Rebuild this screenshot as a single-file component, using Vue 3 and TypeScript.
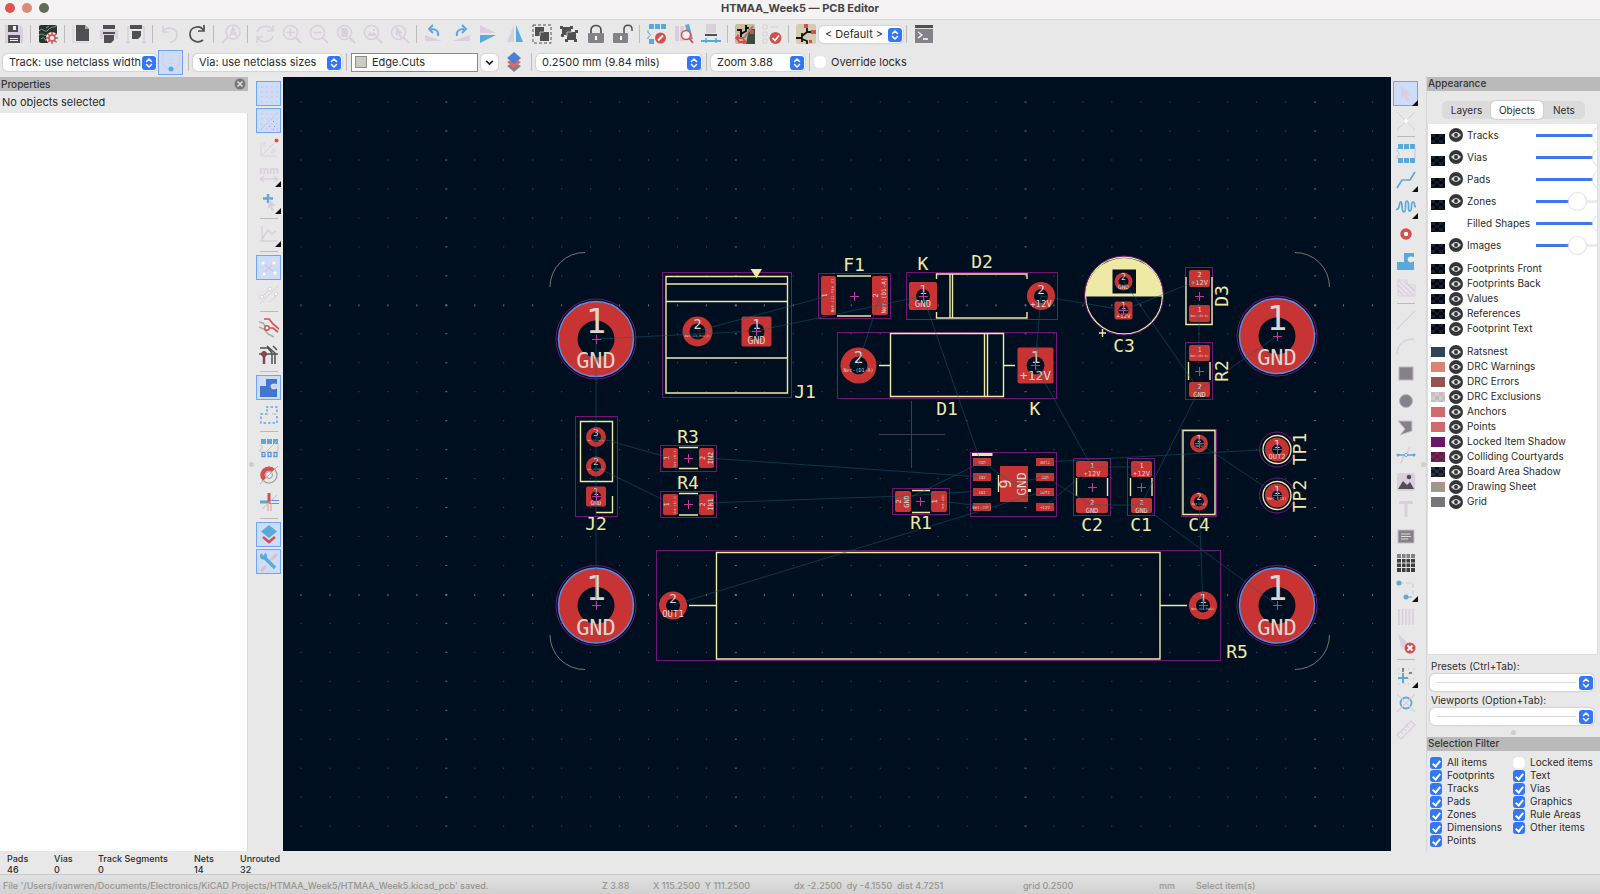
<script setup lang="ts">
import { ref } from 'vue'

type Tool = { icon: string; label: string; on?: boolean; more?: boolean } | null

const M = '#d9cfdd'
const D = '#505052'
const G = '#858188'
const B = '#5aa9db'
const R = '#d4504f'

const stroke = (d: string, c: string, w = 1.5, extra = '') =>
  `<path d="${d}" fill="none" stroke="${c}" stroke-width="${w}" ${extra}/>`
const fill = (d: string, c: string) => `<path d="${d}" fill="${c}"/>`
const lens = (inner: string) =>
  `<circle cx="8.5" cy="8.5" r="7" fill="none" stroke="${M}" stroke-width="1.5"/>` +
  stroke('M13.5 13.5L19 19', M, 2) + inner
const dots = (c: string) => {
  let s = ''
  for (let x = 0; x < 4; x++) for (let y = 0; y < 4; y++) s += `<rect x="${2 + x * 5}" y="${2 + y * 5}" width="1.5" height="1.5" fill="${c}"/>`
  return s
}

const icons: Record<string, string> = {
  save: fill('M1 1h15l3 3v15H1z', M) + fill('M4 1h10v7H4zM4 11h12v8H4z', D) + fill('M9 2h3v4H9zM6 14h8v1H6zM6 16h8v1H6z', '#eee'),
  setup: `<rect x="1" y="1" width="18" height="18" rx="2" fill="#26352d"/>` + stroke('M1 7c4-5 5 3 9-1s5-2 8-4M1 11c5-3 4 2 8 0M3 15c2-2 4-1 5 2M8 4l3-2', '#8fa096', 1) +
    `<circle cx="14" cy="14" r="6" fill="#f3e9e6"/><circle cx="14" cy="14" r="3" fill="none" stroke="${R}" stroke-width="1.5"/>` + stroke('M14 8v3M14 17v3M8 14h3M17 14h3M10 10l2 2M16 16l2 2M18 10l-2 2M12 16l-2 2', R, 1.5),
  page: fill('M4 1h9l4 4v12H4z', D) + fill('M13 1l4 4h-4z', '#aaa') + stroke('M1 1v18M1 18.5h16', M, 1),
  print: fill('M1 6h18v9h-3v-3H4v3H1z', M) + fill('M4 1h12v4H4zM4 8h12v2H4zM5 11h10v5l-3 3H5z', D),
  plot: stroke('M1 3h18M2 3v15M18 3v15M0 18.500h4M16 18.500h4', M, 1.5) + fill('M4 1h12v4H4zM6 7h9v5l-3 3H6z', D),
  undo: stroke('M3 2v6h6M3 8c3-6 14-5 14 3 0 4-3 7-7 7', M, 1.7),
  redo: stroke('M17 1v6h-6M17 7C13 0 3 3 3 10c0 7 8 10 13 6', D, 1.7),
  find: `<circle cx="12" cy="8" r="7" fill="none" stroke="${M}" stroke-width="1.500"/>` + stroke('M7 13L1 19', M, 2) + stroke('M9 12l3-8 3 8M10 9.500h4', M, 1.8),
  refresh: stroke('M2 8C4 2 13 0 17 6M18 1v6h-6M18 12c-2 6-11 8-15 2M2 19v-6h6', M, 1.5),
  zin: lens(stroke('M8.500 4.500v8M4.500 8.500h8', M, 1.7)),
  zout: lens(stroke('M4.500 8.500h8', M, 1.7)),
  zpage: lens(fill('M5 4h5l2 2v7H5z', M)),
  zobj: lens(fill('M4 12l3-4 2 2 2-2 3 4zM10 5h2v2h-2z', M)),
  zsel: lens(fill('M6 3l7 6-3 .5 2 4-2 .5-1.500-4-2.500 2z', M)),
  rotl: fill('M1 11l17 6H1z', M) + stroke('M14 12c1-5-2-7-7-7M9 1L5 5l4 4', B, 2),
  rotr: fill('M19 11L2 17h17z', M) + stroke('M6 12c-1-5 2-7 7-7M11 1l4 4-4 4', B, 2),
  mirv: fill('M2 1l16 8H2z', M) + fill('M2 19l16-8H2z', B),
  mirh: fill('M9 1v17H2z', M) + fill('M11 1v17h7z', B),
  group: fill('M3 3h9v9H3z', D) + fill('M8 8h9v9H8z', D) + stroke('M8 12V8h4', '#bbb', 1) + stroke('M1 1h18v18H1z', D, 1, 'stroke-dasharray="3 2"'),
  ungroup: fill('M3 3h9v8H3z', D) + fill('M8 8h9v8H8z', D) + stroke('M8 12V8h5', '#bbb', 1) + fill('M1 2h3v3H1zM15 15h3v3h-3zM11 2h3v3h-3zM2 10h3v3H2zM16 6h3v3h-3zM6 15h3v3H6z', D),
  lock: `<rect x="2" y="9" width="16" height="10" rx="1" fill="${G}"/>` + stroke('M5 9V6c0-6 10-6 10 0v3', D, 1.7) + fill('M9 12h2v4H9z', '#fff'),
  unlock: `<rect x="0" y="9" width="15" height="10" rx="1" fill="${G}"/>` + stroke('M11 9V5c0-5 8-5 8 0v2', D, 1.500) + fill('M7 12h2v4H7z', '#fff'),
  fped: fill('M2 0h5v5H2zM8 0h5v5H8zM14 0h5v5h-5zM2 15h5v5H2z', B) + stroke('M1 6v3c3 0 3 4 0 4v2', B, 1) + `<circle cx="13.500" cy="14" r="5.500" fill="${R}"/>` + stroke('M11 16.500l5-5', '#fff', 2),
  fpbr: fill('M1 2h4v15H1zM6 2h4v15H6z', M) + fill('M11 1l4-1 4 15-4 1z', B) + `<circle cx="12" cy="11" r="4.500" fill="#f5eef0" stroke="${R}" stroke-width="1.500"/>` + stroke('M15 14l4 5', R, 2),
  update: fill('M5 0h10v9H5z', M) + fill('M4 10h12v2H4z', D) + stroke('M0 17h20', B, 2) + stroke('M5 14v5M15 14v5', B, 1.5),
  netl: `<rect x="0" y="0" width="20" height="20" rx="2" fill="#c8bd9f"/>` + fill('M14 5h6v15h-9z', '#3c4c3e') + stroke('M2 6h4v4M6 10l5-3V1M6 10v4M11 4h3', '#111', 2) + stroke('M18 2L9 14', '#8d867c', 2) + fill('M15 6h4v4h-4z', R) + stroke('M1 14h8M4 11l-3 3 3 3M3 18h7M8 15l3 3-3 2', R, 1.8),
  drc: stroke('M1 1h4v4H1zM1 8h4v4H1zM1 15h4v4H1zM8 3h8', M, 1) + `<circle cx="13.500" cy="14" r="6" fill="${R}"/>` + stroke('M10.500 14l2.500 2.500 4-5', '#fff', 1.700),
  schem: `<rect x="0" y="0" width="20" height="20" rx="2" fill="#d3ccae"/>` + stroke('M0 14h6M6 9v9M6 12l5-4V4M6 15l5 2v3M11 8h6', '#151515', 1.8) + fill('M8 0h4v4H8zM15 6h5v4h-5zM13 16h3v3h-3z', R),
  console: fill('M1 1h18v18H1z', G) + fill('M1 1h18v3H1z', D) + stroke('M1 4.500h18', '#ddd', 1) + stroke('M4 8l4 3-4 3M9 15h5', '#fff', 1.3),
  autow: stroke('M2 1v11l4 5h8l4-5V1', M, 1.5) + stroke('M6 8h8M6 11h8', M, 1) + `<circle cx="10" cy="17" r="2.500" fill="${B}"/>`,
  layers: fill('M10 10l7 4-7 6-7-6z', G) + fill('M10 6l7 4-7 6-7-6z', '#e06a60') + fill('M10 0l7 6-7 6-7-6z', '#4b7fd6'),
  grid: dots('#d9c3d6'),
  gridov: dots('#d9c3d6') + stroke('M1 19L19 1', '#d9c3d6', 1) + fill('M10 15h1v1h-1zM14 10h1v1h-1zM15 15h1v1h-1zM14 18h1v1h-1z', '#b08fae'),
  polar: stroke('M2 5v13h16M2 18L17 3', M, 1) + `<text x="4" y="9" font-family="Liberation Sans" font-size="9" fill="${M}">r</text><text x="12" y="16" font-family="Liberation Serif" font-style="italic" font-size="9" fill="${M}">θ</text><circle cx="17.500" cy="2.500" r="2" fill="${R}"/>`,
  mm: `<text x="10" y="9" text-anchor="middle" font-family="Liberation Sans" font-weight="700" font-size="11" fill="${M}">mm</text>` + stroke('M2 14h16M5 11l-4 3 4 3M15 11l4 3-4 3', M, 1.300),
  cursor: stroke('M9 2v9M4 6.500h10', B, 2.500) + fill('M10 7l7 7-4 0 2 4-2 1-2-4-2 2z', M),
  axes: stroke('M3 1v15h16M3 14l6-9 4 4 4-3', M, 1.500) + stroke('M0 16h5', M, 1),
  rats: stroke('M4 5l12 10M5 15L15 5', '#c8bfd0', 1) + '<g fill="#fff" stroke="#ddd"><circle cx="4" cy="5" r="2"/><circle cx="15" cy="5" r="2"/><circle cx="5" cy="16" r="2"/><circle cx="16" cy="15" r="2"/></g>',
  curve: stroke('M3 12l8-8M1 19L19 1M9 17c5-1 8-5 8-9', M, 1) + '<g fill="#fff" stroke="#d5cad8"><circle cx="3" cy="12" r="2"/><circle cx="11" cy="4" r="2"/><circle cx="17" cy="9" r="2"/></g>',
  high: stroke('M0 4l4 1 4 5M0 9l5 2 4 5 6 3', '#aaa', 1.500) + stroke('M5 1h5l4 5 6 5M10 10h4l5 4', R, 1.700) + `<circle cx="8" cy="10" r="2.200" fill="#fff" stroke="${R}" stroke-width="1.500"/>`,
  tracks: stroke('M1 3h8l4 5v11M8 1l8 7v11M14 1l4 4M0 9h19', D, 1.500) + stroke('M5 11v8', '#8a4060', 2.500) + `<circle cx="5" cy="9" r="2.500" fill="#a83c3c" stroke="${D}"/>`,
  zone: fill('M7 1h11v5c-6-2-8 2-5 5 2 1 4 0 5-1v9H1V8h6z', '#4376cf') + stroke('M13 8h6', M, 2),
  zoneo: stroke('M7 2h11v5M18 11v7H2V9h6V2', '#6aa2ea', 1.500, 'stroke-dasharray="2.500 2"') + stroke('M13 9h5', M, 2),
  pads: fill('M2 1h5v5H2zM8 1h5v5H8zM14 1h5v5h-5z', B) + stroke('M3 14.500h3v4H3zM9 14.500h3v4H9zM15 14.500h3v4h-3z', '#5a95e2', 1.300) + stroke('M1 7c3 1 3 4 0 5v2M19 6v8M4 17L18 3', '#cbb', 1),
  viao: `<circle cx="10" cy="10" r="8" fill="none" stroke="#999" stroke-width="1.200"/><circle cx="10" cy="10" r="3.500" fill="none" stroke="#999"/>` + stroke('M14.500 5.500A6 6 0 0 0 5.500 14.500', R, 4.500) + stroke('M1 19L19 1', '#bbb', 1),
  trko: stroke('M1 10h9', B, 3) + stroke('M10 8.500h10M10 11.500h10', '#5a95e2', 1) + stroke('M10 1v10', R, 3) + stroke('M9 11v8M12 11v8', '#d99', 1) + stroke('M3 17L18 3', '#cbb', 1),
  lay2: fill('M10 0l8 6.500-8 6.500-8-6.500z', B) + stroke('M4 12l6 5 6-5', R, 2.500),
  tools: stroke('M18 2l-6 6M2 19l5-5', '#e0bfc4', 2.500) + stroke('M5 5l11 11', B, 3.500) + `<circle cx="4.500" cy="4" r="3.500" fill="${B}"/>` + fill('M1 0l4 4 1-4zM0 0h3l-3 4z', '#cfdffb'),
  arrow: fill('M5 1l10 10h-4l3 6-3 1-3-6-3 3z', M),
  ratl: stroke('M1 1l18 18M19 1L1 19', M, 1) + '<circle cx="10" cy="10" r="2" fill="#fff"/>',
  fp: fill('M2 1h5v5H2zM8 1h5v5H8zM14 1h5v5h-5zM2 15h5v5H2zM8 15h5v5H8zM14 15h5v5h-5z', B) + stroke('M1 5v3c3 1 3 4 0 5v3M19 5v10', '#ccc2cc', 1),
  route: stroke('M1 18l5-8h8l5-8', B, 1.700),
  tune: stroke('M0 12c4 2 3-8 5-7s0 10 3 10 0-11 3-11 0 11 3 10 0-9 3-9 0 4 3 5', B, 1.700),
  via: `<circle cx="10" cy="10" r="4" fill="#fff" stroke="${R}" stroke-width="3.500"/>`,
  zadd: fill('M8 2h10v4c-6-2-8 2-5 5 2 1 4 0 5-1v9H1v-8h7z', B) + stroke('M13 8.500h6', '#eee', 2),
  rule: stroke('M2 2h9v5h8v11H2z', M, 1) + stroke('M2 7l11 11M2 12l6 6M3 3l15 15M8 3l10 10M13 7l6 6', M, 1.500),
  line: stroke('M1 19L19 1', M, 1.500),
  arc: stroke('M1 18C1 8 7 2 18 2', M, 1.500),
  rect: `<rect x="3" y="3" width="14" height="13" fill="${G}" stroke="#bcb4bf"/>`,
  circ: `<circle cx="10" cy="10" r="6.500" fill="${G}" stroke="#bcb4bf"/>`,
  poly: `<path d="M2 3h14v10l-12 4 5-6z" fill="${G}" stroke="#ccc3cf"/>`,
  bez: stroke('M14 2c-4 4 0 6-5 8s0 5-5 8', M, 1.500) + stroke('M1 10h18', B, 1.500) + `<circle cx="2" cy="10" r="1.500" fill="${B}"/><circle cx="18" cy="10" r="1.500" fill="${B}"/><circle cx="10" cy="10" r="1.500" fill="#fff" stroke="${B}"/>`,
  img: `<rect x="1" y="1" width="18" height="18" rx="2" fill="${M}"/>` + fill('M2 17l5-8 4 4 3-3 4 7z', D) + `<circle cx="13" cy="5" r="2.300" fill="${D}"/>`,
  text: fill('M3 2h14v3h-5.500v13h-3V5H3z', M),
  tbox: `<rect x="2" y="4" width="16" height="13" fill="${G}" stroke="#c6bdc9"/>` + stroke('M5 8h9M5 10.500h10M5 13h7', '#ddd', 1),
  table: fill('M1 1h18v18H1z', '#3e3e40') + fill('M1 1h18v4H1z', G) + stroke('M1 5.500h18M1 10h18M1 14.500h18M5.500 1v18M10 1v18M14.500 1v18', '#e2e2e2', 1),
  dim: stroke('M3 3h13M17 3v12', '#ccc', 1, 'stroke-dasharray="5 2"') + `<circle cx="3" cy="3" r="2.500" fill="${B}"/><circle cx="10" cy="17" r="2.500" fill="${B}"/>` + stroke('M10 17h6', B, 1),
  bar: stroke('M3 2v16M6.500 2v16M10 2v16M13.500 2v16M17 2v16', M, 1.700),
  del: fill('M2 0l12 11H9l-3 5z', M) + `<circle cx="14" cy="14" r="5.500" fill="${R}"/>` + stroke('M11.500 11.500l5 5M16.500 11.500l-5 5', '#fff', 1.800),
  origin: dots(M) + stroke('M7 7v10M2 12h10', B, 2) + stroke('M7 2v4M13 7h3', '#665', 1.500),
  gorig: `<circle cx="10" cy="10" r="5.500" fill="none" stroke="${B}" stroke-width="1.800"/>` + stroke('M1 1l18 18M19 1L1 19', M, 1.200),
  ruler: stroke('M1 15L15 1l4 4L5 19zM5 12l2 2M8 9l2 2M11 6l2 2', M, 1.300),
}

const topTools: Tool[] = [
  { icon: 'save', label: 'Save' }, null, { icon: 'setup', label: 'Board setup' }, null,
  { icon: 'page', label: 'Page settings' }, { icon: 'print', label: 'Print' }, { icon: 'plot', label: 'Plot' }, null,
  { icon: 'undo', label: 'Undo' }, { icon: 'redo', label: 'Redo' }, null, { icon: 'find', label: 'Find' }, null,
  { icon: 'refresh', label: 'Refresh' }, { icon: 'zin', label: 'Zoom in' }, { icon: 'zout', label: 'Zoom out' },
  { icon: 'zpage', label: 'Zoom to fit' }, { icon: 'zobj', label: 'Zoom to objects' }, { icon: 'zsel', label: 'Zoom to selection' }, null,
  { icon: 'rotl', label: 'Rotate left' }, { icon: 'rotr', label: 'Rotate right' }, { icon: 'mirv', label: 'Mirror vertically' },
  { icon: 'mirh', label: 'Mirror horizontally' }, { icon: 'group', label: 'Group' }, { icon: 'ungroup', label: 'Ungroup' },
  { icon: 'lock', label: 'Lock' }, { icon: 'unlock', label: 'Unlock' }, null,
  { icon: 'fped', label: 'Footprint editor' }, { icon: 'fpbr', label: 'Footprint browser' }, { icon: 'update', label: 'Check footprints' }, null,
  { icon: 'netl', label: 'Update from schematic' }, { icon: 'drc', label: 'Design rules checker' }, null,
  { icon: 'schem', label: 'Schematic editor' },
]
const leftTools: Tool[] = [
  { icon: 'grid', label: 'Show grid', on: true }, { icon: 'gridov', label: 'Grid overrides', on: true },
  { icon: 'polar', label: 'Polar coordinates' }, { icon: 'mm', label: 'Units', more: true }, { icon: 'cursor', label: 'Cursor shape', more: true }, null,
  { icon: 'axes', label: 'Line modes', more: true }, null,
  { icon: 'rats', label: 'Show ratsnest', on: true }, { icon: 'curve', label: 'Curved ratsnest' }, null,
  { icon: 'high', label: 'Layer contrast' }, { icon: 'tracks', label: 'Net highlight' }, null,
  { icon: 'zone', label: 'Zone fills', on: true }, { icon: 'zoneo', label: 'Zone outlines' }, null,
  { icon: 'pads', label: 'Sketch pads' }, { icon: 'viao', label: 'Sketch vias' }, { icon: 'trko', label: 'Sketch tracks' }, null,
  { icon: 'lay2', label: 'Appearance manager', on: true }, { icon: 'tools', label: 'Properties manager', on: true },
]
const rightTools: Tool[] = [
  { icon: 'arrow', label: 'Select', on: true, more: true }, { icon: 'ratl', label: 'Local ratsnest' }, null,
  { icon: 'fp', label: 'Place footprint' }, { icon: 'route', label: 'Route tracks', more: true }, { icon: 'tune', label: 'Tune length', more: true },
  { icon: 'via', label: 'Place via' }, { icon: 'zadd', label: 'Draw zone' }, { icon: 'rule', label: 'Draw rule area' }, null,
  { icon: 'line', label: 'Line' }, { icon: 'arc', label: 'Arc' }, { icon: 'rect', label: 'Rectangle' }, { icon: 'circ', label: 'Circle' },
  { icon: 'poly', label: 'Polygon' }, { icon: 'bez', label: 'Bezier' }, { icon: 'img', label: 'Image' }, { icon: 'text', label: 'Text' },
  { icon: 'tbox', label: 'Text box' }, { icon: 'table', label: 'Table' }, { icon: 'dim', label: 'Dimension', more: true },
  { icon: 'bar', label: 'Barcode' }, { icon: 'del', label: 'Delete' }, null,
  { icon: 'origin', label: 'Drill origin', more: true }, { icon: 'gorig', label: 'Grid origin' }, { icon: 'ruler', label: 'Measure' },
]

const sliders = ref([
  { name: 'Tracks', v: 100, eye: true }, { name: 'Vias', v: 100, eye: true }, { name: 'Pads', v: 100, eye: true },
  { name: 'Zones', v: 58, eye: true }, { name: 'Filled Shapes', v: 100, eye: false }, { name: 'Images', v: 58, eye: true },
])
const plain = ['Footprints Front', 'Footprints Back', 'Values', 'References', 'Footprint Text']
const coloured = [
  ['Ratsnest', 'c-rats'], ['DRC Warnings', 'c-warn'], ['DRC Errors', 'c-err'], ['DRC Exclusions', 'c-excl'], ['Anchors', 'c-anchor'],
  ['Points', 'c-anchor'], ['Locked Item Shadow', 'c-lock'], ['Colliding Courtyards', 'c-coll'], ['Board Area Shadow', 'c-board'],
  ['Drawing Sheet', 'c-sheet'], ['Grid', 'c-grid'],
]
const filters = ref([
  { n: 'All items', on: true }, { n: 'Locked items', on: false }, { n: 'Footprints', on: true }, { n: 'Text', on: true },
  { n: 'Tracks', on: true }, { n: 'Vias', on: true }, { n: 'Pads', on: true }, { n: 'Graphics', on: true },
  { n: 'Zones', on: true }, { n: 'Rule Areas', on: true }, { n: 'Dimensions', on: true }, { n: 'Other items', on: true }, { n: 'Points', on: true },
])
const override = ref(false)
const stats = [['Pads', '46'], ['Vias', '0'], ['Track Segments', '0'], ['Nets', '14'], ['Unrouted', '32']]

// Board geometry
const gridX = Array.from({ length: 39 }, (_, i) => ({ p: 301 + i * 28.96, major: i % 10 === 5 }))
const gridY = Array.from({ length: 27 }, (_, i) => ({ p: 101.6 + i * 28.96, major: i % 10 === 7 }))
const courts = [
  [662, 272, 129, 125], [818, 273, 72, 45], [906, 272, 151, 47], [837, 332, 219, 66], [1185, 267, 27, 57], [1185, 342, 27, 57],
  [1181, 429, 35, 87], [1127, 458, 27, 57], [1073, 458, 37, 57], [970, 452, 86, 64], [892, 488, 57, 26],
  [660, 445, 56, 26], [660, 491, 56, 26], [575, 416, 42, 100], [656, 550, 564, 110],
]
const silk = [
  'M666 276.500H787.500V393H666zM666 284H787.500M666 301.500H787.500M666 358H787.500',
  'M837 276H871M837 316H871',
  'M936.500 279V274H1027V279M936.500 312V318H1027V312M950 274V318M952.500 274V318',
  'M890.500 333.500H1003.500V396.500H890.500zM984.500 334V396M987.500 334V396M879 365.500H890M1004 365.500H1015',
  'M1186 277V324.500H1212V277M1188.500 362V380M1210 362V380',
  'M1183 430.500H1215V514.500H1183zM1130.500 478V496M1152 478V496M1076.500 478V496M1107.500 478V496',
  'M912 490.500H930M912 512.500H930M679 447.500H698M679 468.500H698M679 493.500H698M679 515H698',
  'M580.500 421.500H612.500V481.500H580.500zM596 512.500H612.500V496M998.500 475V492M1099 333H1106M1102.500 329V337',
  'M716.500 552.500H1160V659H716.500zM689 605.500H716M1160 605.500H1187',
]
const bigPads = [[596, 339], [1277, 336], [596, 605.5], [1277, 605.5]]
const rounds = [
  [697.5, 331.5, 15, 8, '2', 'Net-(J1-Pin_2)', 3], [1041, 296, 14, 7, '2', '+12V', 9], [858.5, 365.5, 18, 9, '2', 'Net-(D1-A)', 5],
  [1123.5, 281.5, 9, 5, '2', 'GND', 6], [1199, 443.5, 9, 5, '1', 'OUT2', 3], [1199, 501.5, 9, 5, '2', 'Net-(C4)', 3],
  [596, 437, 10, 5, '3', 'Net-(J2-Pin_3)', 2], [596, 466.5, 10, 5, '2', 'Net-(J2-Pin_2)', 2],
  [673, 605.5, 14, 7, '2', 'OUT1', 9], [1203, 605.5, 14, 7, '1', 'Net-(C4-Pad2)', 3],
  [1277, 449.5, 12, 5, '1', 'OUT2', 7], [1277, 495.5, 12, 5, '1', 'Net-(C4)', 4],
] as [number, number, number, number, string, string, number][]
const squares = [
  [756.5, 331.5, 15, 8, '1', 'GND', 10], [923, 296, 14, 7, '1', 'GND', 9], [1035.500, 365.5, 18, 9, '1', '+12V', 13],
  [1123.5, 310.5, 9, 5, '1', '+12V', 6], [596, 496.5, 10, 5, '1', 'GND', 6],
] as [number, number, number, number, string, string, number][]
const smd = [
  [1189, 270, 21, 17, '2', '+12V', 7], [1189, 305, 21, 17, '1', 'Net-(D3-K)', 3], [1189, 345, 21, 16, '1', 'Net-(D3-K)', 3], [1189, 382, 21, 15, '2', 'GND', 7],
  [1131, 461, 21, 16, '1', '+12V', 7], [1131, 498, 21, 15, '2', 'GND', 7], [1076, 461, 32, 16, '1', '+12V', 7], [1076, 498, 32, 15, '2', 'GND', 7],
] as [number, number, number, number, string, string, number][]
const vert = [
  [821, 276, 15, 39, '1', 'Net-(J1-Pin_2)', 4], [872, 276, 16, 39, '2', 'Net-(D1-A)', 6], [663, 448, 15, 20, '1', 'Net-(J2-3)', 3], [699, 448, 15, 20, '2', 'IN2', 7],
  [663, 494, 15, 21, '1', 'Net-(J2-2)', 3], [699, 494, 15, 21, '2', 'IN1', 7], [895, 491, 16, 21, '2', 'GND', 7], [931, 491, 16, 21, '1', 'Net-(U1)', 3],
] as [number, number, number, number, string, string, number][]
const icPads = [0, 1, 2, 3].flatMap((i) => [
  { x: 973, y: 458 + i * 15, t: ['GND', 'IN2', 'IN1', 'Net-(U1)'][i] }, { x: 1036, y: 458 + i * 15, t: ['OUT2', 'GND', 'OUT1', '+12V'][i] },
])
const crosses = [[854, 296], [1199, 296], [1199, 371], [1141, 487], [1092, 487], [920, 501], [688, 458], [688, 504], [596, 339], [1277, 336], [596, 605], [1277, 605], [756, 331], [923, 296], [1035, 365], [1123, 310], [596, 496], [1203, 605], [1199, 443], [1277, 449], [1277, 495]]
const labels = [
  ['F1', 854, 271], ['K', 923, 270], ['D2', 982, 268], ['D1', 947, 415], ['K', 1035, 415], ['C3', 1124, 352], ['J1', 805, 398], ['R3', 688, 443],
  ['R4', 688, 489], ['J2', 596, 530], ['R1', 921, 529], ['C2', 1092, 531], ['C1', 1141, 531], ['C4', 1199, 531], ['R5', 1237, 658],
] as [string, number, number][]
const sideLabels = [['D3', 1222, 296], ['R2', 1222, 371], ['TP1', 1300, 449], ['TP2', 1300, 496]] as [string, number, number][]
const rats = 'M596 339L756 331M596 339V605M697 331L828 296M756 331L923 296L980 460M880 296L858 365M1041 296L1124 310L1199 280M1041 296L1035 365L1092 467H1141M1124 282L1199 390L1277 336M1199 313V352M1199 390L1141 505L1277 605M596 437L670 458M596 467L670 503M707 458L982 477M707 503L903 496L982 491M1045 462L1277 449M1199 443L1277 495M1199 501L1203 605M673 605L1045 491M903 501L982 462L1013 483L1045 477L1092 505H1141M939 501L982 506M1092 467L1045 506'
</script>

<template>
  <div class="app">
    <header class="title">
      <div class="lights"><i class="red"></i><i class="amber"></i><i class="green"></i></div>
      <h1>HTMAA_Week5 — PCB Editor</h1>
    </header>

    <div class="bar top">
      <template v-for="(t, i) in topTools" :key="i">
        <button v-if="t" class="tool" type="button" :aria-label="t.label"><svg viewBox="0 0 20 20" v-html="icons[t.icon]"></svg></button>
        <span v-else class="sep"></span>
      </template>
      <span class="drop w-def">
        <select aria-label="Default"><option>&lt; Default &gt;</option></select>
        <svg viewBox="0 0 14 14"><rect width="14" height="14" rx="3" /><path d="M4.500 5.500L7 3l2.500 2.500M4.500 8.500L7 11l2.500-2.500" /></svg>
      </span>
      <span class="sep"></span>
      <button class="tool" type="button" aria-label="Scripting console"><svg viewBox="0 0 20 20" v-html="icons.console"></svg></button>
    </div>

    <div class="bar second">
      <span class="drop w-track">
        <select aria-label="Track width"><option>Track: use netclass width</option></select>
        <svg viewBox="0 0 14 14"><rect width="14" height="14" rx="3" /><path d="M4.500 5.500L7 3l2.500 2.500M4.500 8.500L7 11l2.500-2.500" /></svg>
      </span>
      <button class="tool on" type="button" aria-label="Auto track width"><svg viewBox="0 0 20 20" v-html="icons.autow"></svg></button>
      <span class="sep wide"></span>
      <span class="drop w-via">
        <select aria-label="Via size"><option>Via: use netclass sizes</option></select>
        <svg viewBox="0 0 14 14"><rect width="14" height="14" rx="3" /><path d="M4.500 5.500L7 3l2.500 2.500M4.500 8.500L7 11l2.500-2.500" /></svg>
      </span>
      <span class="sep wide"></span>
      <span class="layer"><i></i><input type="text" value="Edge.Cuts" aria-label="Layer" /></span>
      <button class="chev" type="button" aria-label="Choose layer"><svg viewBox="0 0 10 10"><path d="M2 3.500l3 3 3-3" /></svg></button>
      <button class="tool" type="button" aria-label="Layer pair"><svg viewBox="0 0 20 20" v-html="icons.layers"></svg></button>
      <span class="sep wide"></span>
      <span class="drop w-grid">
        <select aria-label="Grid"><option>0.2500 mm (9.84 mils)</option></select>
        <svg viewBox="0 0 14 14"><rect width="14" height="14" rx="3" /><path d="M4.500 5.500L7 3l2.500 2.500M4.500 8.500L7 11l2.500-2.500" /></svg>
      </span>
      <span class="sep wide"></span>
      <span class="drop w-zoom">
        <select aria-label="Zoom"><option>Zoom 3.88</option></select>
        <svg viewBox="0 0 14 14"><rect width="14" height="14" rx="3" /><path d="M4.500 5.500L7 3l2.500 2.500M4.500 8.500L7 11l2.500-2.500" /></svg>
      </span>
      <span class="sep wide"></span>
      <label class="check override"><input v-model="override" type="checkbox" />Override locks</label>
    </div>

    <main class="main">
      <section class="props">
        <h2>Properties<button type="button" aria-label="Close"><svg viewBox="0 0 12 12"><circle cx="6" cy="6" r="5.500" /><path d="M3.500 3.500l5 5M8.500 3.500l-5 5" /></svg></button></h2>
        <p>No objects selected</p>
        <div class="blank"></div>
      </section>
      <div class="grip"><i></i></div>
      <nav class="side left">
        <template v-for="(t, i) in leftTools" :key="i">
          <button v-if="t" class="tool" :class="{ on: t.on, more: t.more }" type="button" :aria-label="t.label"><svg viewBox="0 0 20 20" v-html="icons[t.icon]"></svg></button>
          <span v-else class="hsep"></span>
        </template>
      </nav>

      <div class="canvas">
        <svg class="board" viewBox="283 77 1108 774" preserveAspectRatio="xMidYMid slice">
          <template v-for="gy in gridY" :key="gy.p">
            <rect v-for="gx in gridX" :key="gx.p" :x="gx.p - 0.5" :y="gy.p" :width="gx.major ? 2 : 1" :height="gy.major ? 2 : 1" class="dot" :class="{ major: gx.major || gy.major }" />
          </template>
          <path class="edge" d="M550 287A34.500 34.500 0 0 1 585 252.500M1295 252.500A34.500 34.500 0 0 1 1329.500 287M550 635A34.500 34.500 0 0 0 585 669.500M1295 669.500A34.500 34.500 0 0 0 1329.500 635" />
          <path class="aim" d="M879 434.500H945M911.500 401V468" />
          <circle cx="1124" cy="295.500" r="38.500" class="silk" />
          <path class="silk-fill" d="M1085.500 296.500A38.500 38.500 0 0 1 1162.500 296.500z" />
          <circle cx="1124" cy="295.500" r="39.500" class="court" />
          <rect x="1112.500" y="269.500" width="23.500" height="24" class="hole" />

          <g v-for="(p, i) in bigPads" :key="'b' + i">
            <circle :cx="p[0]" :cy="p[1]" r="40" class="court" />
            <circle :cx="p[0]" :cy="p[1]" r="37.500" class="pad ring" />
            <circle :cx="p[0]" :cy="p[1]" r="18.500" class="hole" />
            <text :x="p[0]" :y="p[1] - 6" class="t" font-size="34">1</text>
            <text :x="p[0]" :y="p[1] + 29" class="t" font-size="22">GND</text>
          </g>
          <g v-for="(p, i) in squares" :key="'s' + i">
            <rect :x="p[0] - p[2]" :y="p[1] - p[2]" :width="p[2] * 2" :height="p[2] * 2" rx="2" class="pad" />
            <circle :cx="p[0]" :cy="p[1]" :r="p[3]" class="hole" />
            <text :x="p[0]" :y="p[1] - p[2] * 0.15" class="t" :font-size="p[2] * 0.9">{{ p[4] }}</text>
            <text :x="p[0]" :y="p[1] + p[2] * 0.8" class="t" :font-size="p[6]">{{ p[5] }}</text>
          </g>
          <g v-for="(p, i) in rounds" :key="'r' + i">
            <circle :cx="p[0]" :cy="p[1]" :r="p[2]" class="pad" />
            <circle :cx="p[0]" :cy="p[1]" :r="p[3]" class="hole" />
            <text :x="p[0]" :y="p[1] - p[2] * 0.15" class="t" :font-size="p[2] * 0.9">{{ p[4] }}</text>
            <text :x="p[0]" :y="p[6] < 6 ? p[1] + p[2] * 0.35 : p[1] + p[2] * 0.8" class="t" :font-size="p[6]">{{ p[5] }}</text>
          </g>
          <g v-for="(p, i) in smd" :key="'m' + i">
            <rect :x="p[0]" :y="p[1]" :width="p[2]" :height="p[3]" rx="2" class="pad" />
            <text :x="p[0] + p[2] / 2" :y="p[1] + 7" class="t" font-size="7">{{ p[4] }}</text>
            <text :x="p[0] + p[2] / 2" :y="p[1] + (p[6] < 5 ? 12 : 15)" class="t" :font-size="p[6]">{{ p[5] }}</text>
          </g>
          <g v-for="(p, i) in vert" :key="'v' + i">
            <rect :x="p[0]" :y="p[1]" :width="p[2]" :height="p[3]" rx="2" class="pad" />
            <text class="t" font-size="7" :transform="`translate(${p[0] + 6} ${p[1] + p[3] / 2}) rotate(-90)`">{{ p[4] }}</text>
            <text class="t" :font-size="p[6]" :transform="`translate(${p[0] + (p[6] < 5 ? 13 : 14)} ${p[1] + p[3] / 2}) rotate(-90)`">{{ p[5] }}</text>
          </g>
          <g v-for="(p, i) in icPads" :key="'i' + i">
            <rect :x="p.x" :y="p.y" width="18" height="8" class="pad" />
            <text :x="p.x + 9" :y="p.y + 6" class="t" font-size="4">{{ p.t }}</text>
          </g>
          <rect x="1000" y="466" width="28" height="36" class="pad" />
          <text class="t" font-size="15" transform="translate(1011 484) rotate(-90)">9</text>
          <text class="t" font-size="13" transform="translate(1026 484) rotate(-90)">GND</text>

          <rect v-for="(c, i) in courts" :key="'c' + i" :x="c[0] + 0.500" :y="c[1] + 0.500" :width="c[2]" :height="c[3]" class="court" />
          <path v-for="(s, i) in silk" :key="'k' + i" :d="s" class="silk" />
          <path class="silk-fill" d="M750.500 269H762L756.500 278zM972 453H992.500V456H972zM1028 489h3v3h-3z" />
          <g v-for="y in [449.500, 495.500]" :key="y">
            <circle cx="1277" :cy="y" r="17.500" class="court" />
            <circle cx="1277" :cy="y" r="14" class="silk" />
          </g>
          <path class="rats" :d="rats" />
          <path v-for="(c, i) in crosses" :key="'x' + i" class="cross" :d="`M${c[0] - 4} ${c[1] + 0.5}h9M${c[0] + 0.5} ${c[1] - 4}v9`" />
          <text v-for="(l, i) in labels" :key="'l' + i" :x="l[1]" :y="l[2]" class="ref">{{ l[0] }}</text>
          <text v-for="(l, i) in sideLabels" :key="'q' + i" class="ref" :transform="`translate(${l[1] + 6} ${l[2]}) rotate(-90)`">{{ l[0] }}</text>
        </svg>
      </div>

      <nav class="side right">
        <template v-for="(t, i) in rightTools" :key="i">
          <button v-if="t" class="tool" :class="{ on: t.on, more: t.more }" type="button" :aria-label="t.label"><svg viewBox="0 0 20 20" v-html="icons[t.icon]"></svg></button>
          <span v-else class="hsep"></span>
        </template>
      </nav>
      <div class="grip thin"><i></i></div>

      <aside class="panel">
        <h2>Appearance</h2>
        <div class="tabs"><button type="button">Layers</button><button type="button" class="active">Objects</button><button type="button">Nets</button></div>
        <div class="objects">
          <div class="sliders">
            <div v-for="s in sliders" :key="s.name" class="obj tall">
              <i class="swatch dark"></i>
              <span class="eye"><svg v-if="s.eye" viewBox="0 0 14 14"><circle cx="7" cy="7" r="7" /><path d="M2 7q5-6 10 0q-5 6-10 0z" /><circle cx="7" cy="7" r="2" /></svg></span>
              <label :for="'s-' + s.name">{{ s.name }}</label>
              <input :id="'s-' + s.name" v-model="s.v" type="range" min="0" max="100" :style="{ '--v': s.v + '%' }" />
            </div>
          </div>
          <div class="set">
            <div v-for="n in plain" :key="n" class="obj">
              <i class="swatch dark"></i>
              <span class="eye"><svg viewBox="0 0 14 14"><circle cx="7" cy="7" r="7" /><path d="M2 7q5-6 10 0q-5 6-10 0z" /><circle cx="7" cy="7" r="2" /></svg></span>
              <span>{{ n }}</span>
            </div>
          </div>
          <div class="set">
            <div v-for="c in coloured" :key="c[0]" class="obj">
              <i class="swatch" :class="c[1]"></i>
              <span class="eye"><svg viewBox="0 0 14 14"><circle cx="7" cy="7" r="7" /><path d="M2 7q5-6 10 0q-5 6-10 0z" /><circle cx="7" cy="7" r="2" /></svg></span>
              <span>{{ c[0] }}</span>
            </div>
          </div>
        </div>
        <div class="presets">
          <label for="presets">Presets (Ctrl+Tab):</label>
          <span class="drop empty"><select id="presets"><option></option></select><svg viewBox="0 0 14 14"><rect width="14" height="14" rx="3" /><path d="M4.500 5.500L7 3l2.500 2.500M4.500 8.500L7 11l2.500-2.500" /></svg></span>
          <label for="viewports">Viewports (Option+Tab):</label>
          <span class="drop empty"><select id="viewports"><option></option></select><svg viewBox="0 0 14 14"><rect width="14" height="14" rx="3" /><path d="M4.500 5.500L7 3l2.500 2.500M4.500 8.500L7 11l2.500-2.500" /></svg></span>
        </div>
        <div class="hgrip"><i></i></div>
        <h2>Selection Filter</h2>
        <div class="filters">
          <label v-for="f in filters" :key="f.n" class="check"><input v-model="f.on" type="checkbox" />{{ f.n }}</label>
        </div>
      </aside>
    </main>

    <div class="stats">
      <dl v-for="s in stats" :key="s[0]"><dt>{{ s[0] }}</dt><dd>{{ s[1] }}</dd></dl>
    </div>
    <footer class="status">
      <span>File '/Users/ivanwren/Documents/Electronics/KiCAD Projects/HTMAA_Week5/HTMAA_Week5.kicad_pcb' saved.</span>
      <span>Z 3.88</span><span>X 115.2500&nbsp; Y 111.2500</span><span>dx -2.2500&nbsp; dy -4.1550&nbsp; dist 4.7251</span><span>grid 0.2500</span><span>mm</span><span>Select item(s)</span>
    </footer>
  </div>
</template>

<style>
body { margin: 0; overflow: hidden; }
</style>

<style scoped>
* { box-sizing: border-box; }
.app { display: flex; flex-direction: column; height: 100vh; background: #e9e8e8; color: #2b2b2b; font: 11px/14px Inter, "Liberation Sans", sans-serif; }
button, select, input { font: inherit; color: inherit; margin: 0; }
button { padding: 0; border: 0; background: none; }
h1, h2, p, dl, dd { margin: 0; }
.title { display: grid; grid-template-columns: 1fr auto 1fr; align-items: center; height: 20px; background: #f5f2f3; border-bottom: 1px solid #d8d5d6; flex: none; padding-bottom: 3px; }
.title h1 { font-size: 11px; line-height: 15px; font-weight: 700; color: #454344; }
.lights { display: flex; gap: 7px; padding-left: 5px; }
.lights i { width: 10px; height: 10px; border-radius: 50%; }
.red { background: #dd5450; }
.amber { background: #dc8a7a; }
.green { background: #626b53; }

.bar { display: flex; align-items: center; flex: none; }
.top { height: 28px; }
.second { height: 29px; padding: 0 0 1px 3px; }
.tool { position: relative; display: flex; align-items: center; justify-content: center; width: 27px; height: 27px; flex: none; }
.tool svg { width: 20px; height: 20px; display: block; }
.tool.on::before { content: ""; position: absolute; inset: 1px; border: 1px solid #71a4f4; background: #cddcf8; }
.tool.on svg { position: relative; }
.tool.more::after { content: ""; position: absolute; right: 1px; bottom: 1px; border: 3px solid #111; border-top-color: transparent; border-left-color: transparent; }
.sep { width: 1px; height: 18px; margin: 0 3px; background: #bdb9bc; flex: none; }
.sep.wide { margin: 0 4px; }
.drop { position: relative; display: flex; flex: none; }
.drop select { appearance: none; width: 100%; height: 17px; border: 0; border-radius: 5px; background: #fff; box-shadow: 0 0 1px 1px #d4d2d3; padding: 0 16px 0 6px; font-size: 11px; line-height: 16px; outline: 0; color: #2b2b2b; }
.drop svg { position: absolute; right: 1px; top: 2px; width: 14px; height: 14px; pointer-events: none; }
.drop rect { fill: #3477f5; }
.drop path { fill: none; stroke: #fff; stroke-width: 1.500; stroke-linecap: round; stroke-linejoin: round; }
.w-def { width: 84px; }
.w-track { width: 154px; }
.w-via { width: 149px; }
.w-grid { width: 166px; }
.w-zoom { width: 94px; }
.layer { display: flex; align-items: center; width: 127px; height: 19px; border: 1px solid #8b8b8b; background: #fff; padding-left: 3px; gap: 5px; }
.layer i { width: 12px; height: 12px; background: #cbcac4; border: 1px solid #8f8e88; flex: none; }
.layer input { width: 90px; border: 0; padding: 0; background: none; outline: 0; }
.chev { width: 17px; height: 17px; margin: 0 2px 0 3px; border-radius: 5px; background: #fff; box-shadow: 0 0 1px 1px #d8d6d7; }
.chev svg { display: block; width: 11px; height: 11px; margin: auto; }
.chev path { fill: none; stroke: #222; stroke-width: 1.500; }
.check { display: flex; align-items: center; }
.check input { appearance: none; width: 12px; height: 12px; border-radius: 3px; background: #fff; box-shadow: inset 0 0 1px #aaa; margin-right: 5px; flex: none; }
.check input:checked { background: #3477f5; box-shadow: none; }
.check input:checked::after { content: ""; display: block; width: 3px; height: 6px; margin: 2px 0 0 4px; border: solid #fff; border-width: 0 2px 2px 0; transform: rotate(40deg); }

.main { display: flex; flex: 1; min-height: 0; }
h2 { height: 14px; padding: 0 1px; background: #bababa; font-size: 10px; line-height: 13px; font-weight: 500; color: #353535; flex: none; }
.props { display: flex; flex-direction: column; width: 248px; flex: none; }
.props h2 { display: flex; justify-content: space-between; align-items: center; padding: 0 2px 0 1px; }
.props h2 button { display: flex; }
.props h2 svg { width: 12px; height: 12px; }
.props h2 circle { fill: #777; }
.props h2 path { stroke: #ddd; stroke-width: 1.500; }
.props p { height: 22px; line-height: 22px; padding-left: 2px; }
.blank { flex: 1; background: #fff; border-right: 1px solid #dcdada; }
.grip { width: 6px; display: flex; align-items: center; justify-content: center; flex: none; }
.grip i, .hgrip i { width: 5px; height: 5px; border-radius: 50%; background: #cfcdce; }
.side { display: flex; flex-direction: column; align-items: center; padding-top: 3px; width: 29px; flex: none; }
.hsep { width: 18px; height: 1px; margin: 3px 0; background: #bcbabb; flex: none; }
.right .hsep { margin: 2px 0; }
.left .hsep { margin: 3px 0 2px; }
.grip.thin { justify-content: flex-end; }
.canvas { flex: 1; min-width: 0; background: #000f20; overflow: hidden; display: flex; }
.board { width: 100%; height: 100%; display: block; }
.dot { fill: #4d5861; }
.dot.major { fill: #6b7377; }
.edge { fill: none; stroke: #77746f; stroke-width: 1; }
.aim { stroke: #3a4045; stroke-width: 1; }
.court { fill: none; stroke: #721574; stroke-width: 1; }
.silk { fill: none; stroke: #eeeaa5; stroke-width: 1.400; }
.silk-fill { fill: #eeeaa5; }
.pad { fill: #c83434; }
.ring { stroke: #5b8ee0; stroke-width: 1.500; }
.hole { fill: #000f20; }
.rats { fill: none; stroke: #0c6470; stroke-width: 1; opacity: 0.500; }
.cross { stroke: #c0389a; stroke-width: 1; }
.t { fill: #ddd6d0; text-anchor: middle; font-family: "DejaVu Sans Mono", monospace; }
.ref { fill: #eeeaa5; text-anchor: middle; font: 18px "DejaVu Sans Mono", monospace; }

.panel { width: 174px; flex: none; display: flex; flex-direction: column; border-left: 1px solid #d8d6d7; font-size: 10px; line-height: 13px; }
.tabs { display: flex; align-self: center; width: 143px; height: 18px; margin: 10px 0 5px; background: #dcdbdb; border-radius: 5px; flex: none; }
.tabs button { flex: 1 1 49px; border-radius: 5px; }
.tabs button:last-child { flex-basis: 42px; }
.tabs .active { flex-basis: 52px; background: #fff; box-shadow: 0 0 1px 1px #d0cece; }
.objects { flex: 1; min-height: 0; overflow: hidden; background: #fff; margin: 0 2px 0 0; border: 1px solid #e0dede; border-width: 0 1px 1px; padding-left: 3px; }
.obj { display: flex; align-items: center; height: 15px; white-space: nowrap; }
.obj.tall { height: 22px; }
.sliders { height: 130px; }
.obj label { width: 69px; flex: none; }
.swatch { width: 14px; height: 10px; margin-right: 4px; flex: none; }
.tall .swatch { margin-top: 8px; }
.eye { display: flex; width: 14px; height: 14px; margin-right: 4px; flex: none; }
.eye svg { width: 14px; height: 14px; }
.eye circle { fill: #343638; }
.eye path { fill: #ddd; }
.dark { background: conic-gradient(#02060f 25%, #101a28 0 50%, #02060f 0 75%, #16202e 0); background-size: 8px 6px; }
.c-rats { background: #2e4558; }
.c-warn { background: #d98575; }
.c-err { background: #985252; }
.c-excl { background: conic-gradient(#cfcdcb 25%, #bdbcba 0 50%, #cfcdcb 0 75%, #c2c1bf 0); background-size: 8px 8px; }
.c-anchor { background: #d16a6c; }
.c-lock { background: #6d1569; }
.c-coll { background: conic-gradient(#8c1c4c 25%, #4e2548 0 50%, #8c1c4c 0 75%, #4e2548 0); background-size: 8px 6px; }
.c-board { background: conic-gradient(#0d1524 25%, #2a313c 0 50%, #0d1524 0 75%, #2a313c 0); background-size: 8px 6px; }
.c-sheet { background: #989a8e; border: 1px solid #c88a80; }
.c-grid { background: #77777b; }
.set { margin-top: 7px; }
.set + .set { margin-top: 8px; }
input[type="range"] { appearance: none; width: 74px; flex: none; height: 17px; background: linear-gradient(90deg, #3b78f0 var(--v), #ececec var(--v)) center / 100% 3px no-repeat; outline: 0; }
input[type="range"]::-webkit-slider-thumb { appearance: none; width: 17px; height: 17px; border-radius: 50%; background: #fff; box-shadow: 0 0 1px 1px #e2e2e2; }
.presets { display: flex; flex-direction: column; padding: 4px 6px 0 3px; flex: none; }
.presets label { height: 15px; line-height: 14px; padding-left: 1px; }
.empty { margin-bottom: 2px; }
.empty::after { content: ""; position: absolute; left: 7px; right: 18px; top: 8px; height: 1px; background: #dcdcdc; }
.hgrip { height: 10px; display: flex; align-items: center; justify-content: center; flex: none; }
.filters { display: grid; grid-template-columns: 83px 1fr; padding: 5px 0 4px 3px; grid-auto-rows: 13px; flex: none; white-space: nowrap; }
.stats { display: grid; grid-template-columns: 47px 44px 96px 46px 1fr; height: 23px; padding: 2px 0 0 7px; flex: none; font-size: 9px; line-height: 11px; font-weight: 500; }
.status { display: grid; grid-template-columns: 599px 51px 141px 229px 136px 37px 1fr; align-items: center; height: 20px; padding: 2px 0 0 3px; flex: none; background: linear-gradient(#e2e2e2, #d2d1d1); border-top: 1px solid #c9c8c8; color: #96958f; font-size: 9px; font-weight: 500; white-space: nowrap; }
</style>
